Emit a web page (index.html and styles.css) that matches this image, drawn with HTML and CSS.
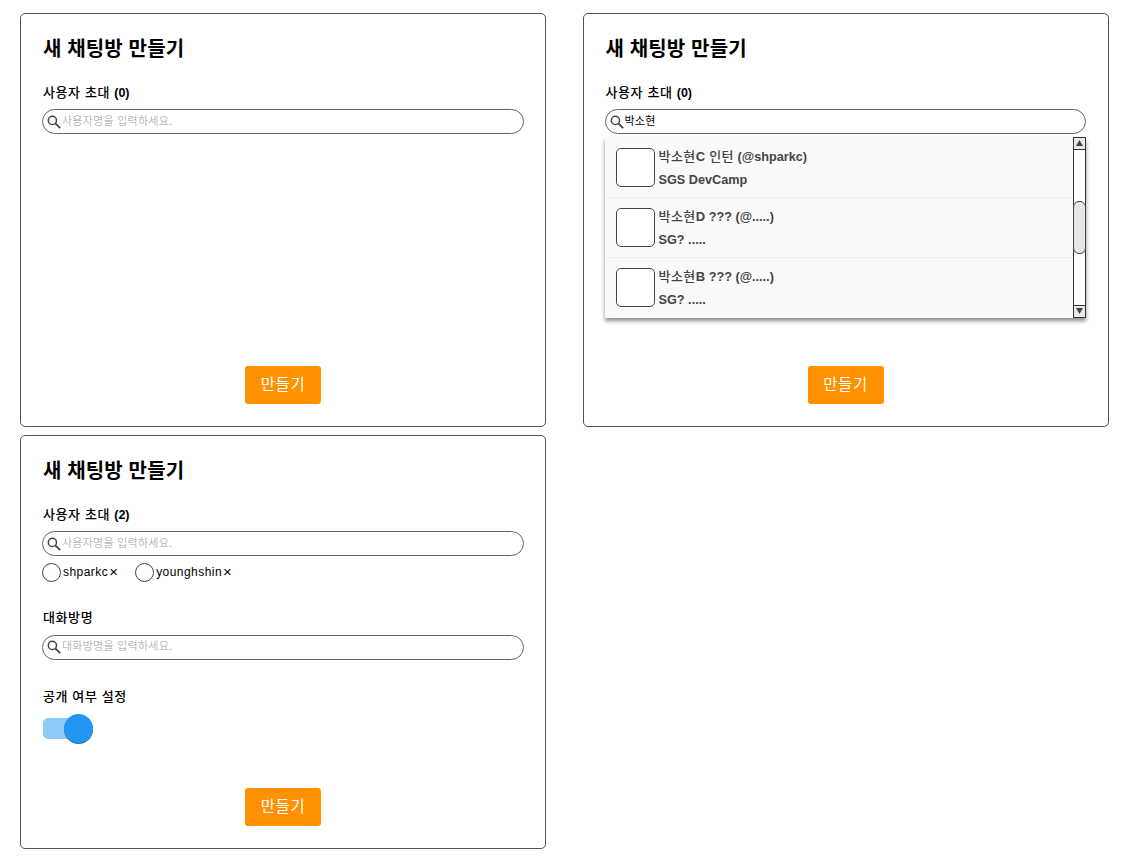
FILE: index.html
```html
<!DOCTYPE html>
<html lang="ko">
<head>
<meta charset="utf-8">
<title>새 채팅방 만들기</title>
<link rel="stylesheet" href="styles.css">
</head>
<body>
<svg class="defs" width="0" height="0">
  <symbol id="search" viewBox="0 0 14 14"><circle cx="5.4" cy="5.4" r="4.1" fill="none" stroke="#444" stroke-width="1.5"/><path d="M8.3 8.3L13.2 13.2" stroke="#444" stroke-width="1.8"/></symbol>
</svg>
<main class="board">
  <section class="card">
    <h1 class="title">새 채팅방 만들기</h1>
    <h2 class="label">사용자 초대 <span class="count">(0)</span></h2>
    <div class="field"><svg class="icon"><use href="#search"/></svg><span class="hint">사용자명을 입력하세요.</span></div>
    <button class="submit">만들기</button>
  </section>
  <section class="card">
    <h1 class="title">새 채팅방 만들기</h1>
    <h2 class="label">사용자 초대 <span class="count">(0)</span></h2>
    <div class="field"><svg class="icon"><use href="#search"/></svg><span class="value">박소현</span></div>
    <div class="dropdown">
      <ul class="results">
        <li class="result"><span class="avatar"></span><div class="person"><p><span class="name">박소현<b>C</b> 인턴</span> (@shparkc)</p><p>SGS DevCamp</p></div></li>
        <li class="result"><span class="avatar"></span><div class="person"><p><span class="name">박소현<b>D</b></span> ??? (@.....)</p><p>SG? .....</p></div></li>
        <li class="result"><span class="avatar"></span><div class="person"><p><span class="name">박소현<b>B</b></span> ??? (@.....)</p><p>SG? .....</p></div></li>
      </ul>
      <div class="scrollbar">
        <span class="arrow"><svg width="7" height="6"><path d="M3.5 0L7 6H0Z" fill="#444"/></svg></span>
        <span class="thumb"></span>
        <span class="arrow"><svg width="7" height="6"><path d="M0 0H7L3.5 6Z" fill="#444"/></svg></span>
      </div>
    </div>
    <button class="submit">만들기</button>
  </section>
  <section class="card">
    <h1 class="title">새 채팅방 만들기</h1>
    <h2 class="label">사용자 초대 <span class="count">(2)</span></h2>
    <div class="field"><svg class="icon"><use href="#search"/></svg><span class="hint">사용자명을 입력하세요.</span></div>
    <div class="tags">
      <span class="tag"><i class="dot"></i><span class="id">shparkc</span><span class="remove">×</span></span>
      <span class="tag"><i class="dot"></i><span class="id">younghshin</span><span class="remove">×</span></span>
    </div>
    <h2 class="label room">대화방명</h2>
    <div class="field"><svg class="icon"><use href="#search"/></svg><span class="hint">대화방명을 입력하세요.</span></div>
    <h2 class="label visibility">공개 여부 설정</h2>
    <div class="switch"><span class="knob"></span></div>
    <button class="submit">만들기</button>
  </section>
</main>
</body>
</html>
```
FILE: styles.css
```css
* { box-sizing: border-box; margin: 0; padding: 0; }
body { background: #fff; color: #000; font-family: "Liberation Sans", "Noto Sans CJK KR", sans-serif; }
.defs { display: block; }
.board { display: grid; grid-template-columns: 526px 526px; grid-auto-rows: 414px; column-gap: 36.5px; row-gap: 8px; padding: 13px 0 0 20px; }
.card { display: flex; flex-direction: column; align-items: flex-start; padding: 20px 21px 22px; border: 1px solid #555; border-radius: 5px; }
.title { height: 30px; line-height: 30px; padding-left: 1px; font-size: 20px; font-weight: 700; letter-spacing: .15px; white-space: nowrap; }
.label { height: 20px; line-height: 20px; margin-top: 19px; padding-left: 1px; font-size: 13px; font-weight: 500; letter-spacing: .6px; white-space: nowrap; }
.count { font-size: 12.5px; font-weight: 700; letter-spacing: 0; }
.field { display: flex; align-items: center; width: 481.5px; height: 25px; margin-top: 6.4px; padding-left: 4px; border: 1px solid #666; border-radius: 13px; flex: none; }
.icon { width: 14px; height: 14px; flex: none; }
.hint, .value { height: 24px; line-height: 22px; margin-left: 1px; font-size: 11px; font-weight: 300; letter-spacing: .25px; color: #999; white-space: nowrap; }
.value { color: #000; font-weight: 400; }
.submit { width: 76px; height: 38px; margin-top: auto; align-self: center; border: 0; border-radius: 3px; background: #ff9100; color: #fff; font-family: inherit; font-size: 15.5px; letter-spacing: .5px; line-height: 37px; padding-bottom: 1px; }
.dropdown { display: flex; width: 481px; height: 181px; margin-top: 2.6px; background: #fafafa; box-shadow: 0 3px 4px rgba(0,0,0,.45); flex: none; }
.results { flex: 1; list-style: none; }
.result { display: flex; height: 60px; padding: 11px 0 0 11px; }
.result + .result { border-top: 1px solid #eee; padding-top: 10px; }
.avatar { width: 39px; height: 39px; border: 1px solid #444; border-radius: 5px; background: #fff; flex: none; }
.person { margin: -3px 0 0 4px; font-size: 12.7px; line-height: 23px; font-weight: 700; color: #444; white-space: nowrap; }
.person p { height: 23px; }
.person p + p { padding-top: 1px; }
.name { font-size: 13px; font-weight: 500; letter-spacing: .45px; }
.name b { letter-spacing: 0; }
.scrollbar { display: flex; flex-direction: column; justify-content: space-between; width: 13px; border: 1px solid #333; background: #fff; }
.arrow { display: flex; align-items: center; justify-content: center; height: 12px; background: #e8e8e8; border-bottom: 1px solid #333; }
.arrow:last-child { border-bottom: 0; border-top: 1px solid #333; }
.thumb { height: 53px; margin: 0 -1px; border: 1px solid #444; border-radius: 6px; background: #e6e6e6; }
.tags { display: flex; gap: 17px; height: 20px; margin-top: 6px; }
.tag { display: flex; align-items: center; font-size: 12px; line-height: 18px; }
.id { letter-spacing: .45px; }
.dot { width: 19px; height: 19px; border: 1px solid #444; border-radius: 50%; margin-right: 2px; }
.remove { width: 9px; margin-left: 1px; font-size: 15px; }
.room { margin-top: 26px; }
.visibility { margin-top: 27px; }
.switch { display: flex; align-items: center; justify-content: flex-end; width: 50px; height: 21px; margin: 11px 0 0 1px; border-radius: 5px; background: linear-gradient(90deg, #90caf9 40px, transparent 40px); flex: none; }
.knob { width: 29px; height: 29px; border-radius: 50%; background: #2196f3; box-shadow: 0 1px 0 #356a98; flex: none; }
```
